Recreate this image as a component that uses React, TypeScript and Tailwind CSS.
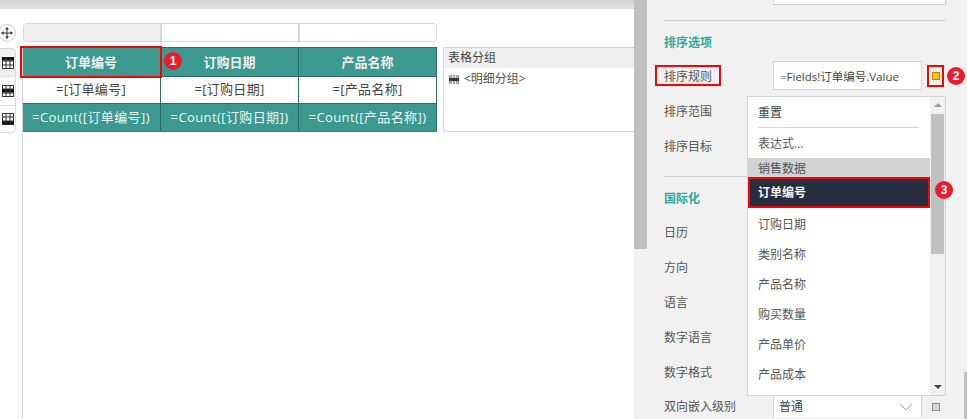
const font = { fontFamily: '"Open Sans", "Noto Sans CJK SC", sans-serif' };

const columnas = [
  { titulo: "订单编号", campo: "=[订单编号]", total: "=Count([订单编号])", ancho: "w-[139px]" },
  { titulo: "订购日期", campo: "=[订购日期]", total: "=Count([订购日期])", ancho: "w-[138px]" },
  { titulo: "产品名称", campo: "=[产品名称]", total: "=Count([产品名称])", ancho: "w-[138px]" },
];

const filasAbajo = ["日历", "方向", "语言", "数字语言", "数字格式"];

const campos = ["订购日期", "类别名称", "产品名称", "购买数量", "产品单价", "产品成本"];

function Badge({ n }: { n: number }) {
  return (
    <span className="flex h-[18px] w-[18px] items-center justify-center rounded-full bg-[#ec1c2c] text-[12px] font-bold leading-none text-white [font-family:'Liberation_Sans',sans-serif]">
      {n}
    </span>
  );
}

// fila: cuál banda del icono va en negro
function TablaIcon({ fila }: { fila: number }) {
  return (
    <svg width="12" height="12" viewBox="0 0 12 12" className="block">
      <rect x="0.5" y="0.5" width="11" height="11" fill="#fff" stroke="#333" />
      <rect x="0" y={fila} width="12" height="3.5" fill="#111" />
      <path d="M4 0v12M8 0v12M0 4h12M0 8h12" stroke="#333" strokeWidth="1" fill="none" />
    </svg>
  );
}

function MoverIcon() {
  return (
    <svg width="12" height="12" viewBox="0 0 12 12" className="block">
      <path d="M6 1.500v9M1.500 6h9" stroke="#333" strokeWidth="1" />
      <path d="M6 0l2 2.500H4zM6 12l2-2.500H4zM0 6l2.500-2v4zM12 6l-2.500-2v4z" fill="#333" />
    </svg>
  );
}

function Fila({ label, h, children }: { label: string; h: string; children?: React.ReactNode }) {
  return (
    <div className={`flex items-center ${h}`}>
      <span className="w-[109px] shrink-0 text-[12px] text-[#555]">{label}</span>
      {children}
    </div>
  );
}

export default function App() {
  return (
    <div style={font} className="relative flex h-[419px] w-[967px] overflow-hidden bg-white">
      {/* lienzo */}
      <div className="flex w-[634px] shrink-0 flex-col">
        <div className="h-[9px] shrink-0 bg-gradient-to-b from-[#d2d2d2] to-[#e4e4e4]" />
        <div className="relative flex-1">
          <div className="absolute bottom-0 left-[22px] top-[38px] w-px bg-[#d0d0d0]" />
          <div className="mt-[14px] flex h-[19px] items-center">
            <div className="flex w-[23px] justify-start">
              <span className="flex h-[18px] w-[18px] -translate-x-[2px] items-center justify-center rounded-full border border-[#d0d0d0] bg-white">
                <MoverIcon />
              </span>
            </div>
            <div className="flex h-[19px] w-[414px] overflow-hidden rounded-[4px] border border-[#d6d6d6]">
              <div className="w-[138px] border-r-2 border-[#d6d6d6] bg-[#f0f0f0]" />
              <div className="w-[138px] border-r-2 border-[#d6d6d6]" />
              <div className="flex-1" />
            </div>
          </div>

          <div className="mt-[5px] flex">
            <div className="mt-px flex w-[16px] shrink-0 flex-col">
              <div className="flex h-[29px] items-center justify-center rounded-tr-[4px] border border-l-0 border-[#dcdcdc] bg-[#f0f0f0]">
                <TablaIcon fila={0} />
              </div>
              <div className="flex h-[28px] items-center justify-center border-r border-[#dcdcdc]">
                <TablaIcon fila={4} />
              </div>
              <div className="flex h-[28px] items-center justify-center rounded-br-[4px] border border-l-0 border-[#dcdcdc]">
                <TablaIcon fila={8} />
              </div>
            </div>
            <div className="ml-[6px] w-[415px] shrink-0 border-t border-[#2c6f68]">
              <div className="flex h-[28px] bg-[#3b9990]">
                {columnas.map((c) => (
                  <div
                    key={c.titulo}
                    className={`${c.ancho} flex items-center justify-center border-r border-[#2c6f68] pt-px text-[13px] font-bold text-[#f0f0f0]`}
                  >
                    {c.titulo}
                  </div>
                ))}
              </div>
              <div className="flex h-[28px] border-y border-[#2c6f68] bg-white">
                {columnas.map((c) => (
                  <div
                    key={c.campo}
                    className={`${c.ancho} flex items-center justify-center border-r border-[#2c6f68] text-[13px] tracking-[0.3px] text-[#444]`}
                  >
                    {c.campo}
                  </div>
                ))}
              </div>
              <div className="flex h-[28px] border-b border-dotted border-[#2c6f68] bg-[#3b9990]">
                {columnas.map((c) => (
                  <div
                    key={c.total}
                    className={`${c.ancho} flex items-center justify-center border-r border-[#2c6f68] text-[13px] tracking-[0.4px] text-[#eef5f4]`}
                  >
                    {c.total}
                  </div>
                ))}
              </div>
            </div>
            <div className="ml-[6px] flex h-[85px] flex-1 flex-col border-y border-l border-[#d4d4d4]">
              <div className="flex h-[20px] items-center bg-[#f0f0f0] pl-[4px] text-[12px] text-[#444]">表格分组</div>
              <div className="flex h-[22px] items-center gap-[5px] pl-[5px] text-[12px] text-[#555]">
                <svg width="10" height="9" viewBox="0 0 10 9" className="block">
                  <rect width="10" height="9" fill="#a8a8a8" />
                  <rect y="3" width="10" height="3" fill="#333" />
                  <path d="M3.500 0v3M6.500 0v3M3.500 6v3M6.500 6v3" stroke="#e8e8e8" strokeWidth="1" />
                </svg>
                {"<明细分组>"}
              </div>
            </div>
          </div>

          <div className="absolute left-[20px] top-[37px] h-[32px] w-[142px] border-2 border-[#ff0000]" />
          <div className="absolute left-[164px] top-[43px]">
            <Badge n={1} />
          </div>
        </div>
      </div>

      {/* barra de desplazamiento */}
      <div className="flex w-[15px] shrink-0 flex-col bg-[#f1f1f1]">
        <div className="h-[249px] w-[13px] bg-[#c0c0c0]" />
      </div>

      {/* panel de propiedades */}
      <div className="relative flex-1 bg-[#f1f1f1] pl-[15px] pr-[21px]">
        <div className="flex h-[5px] justify-end">
          <div className="h-[5px] w-[173px] border border-t-0 border-[#d4d4d4] bg-white" />
        </div>
        <div className="mt-[15px] border-t border-[#d4d4d4]" />
        <div className="flex h-[40px] items-center pt-[3px] text-[12px] font-bold text-[#2fa99b]">排序选项</div>
        <div className="flex h-[29px] items-center">
          <span className="w-[109px] shrink-0 pt-[2px] text-[12px] text-[#555]">排序规则</span>
          <div className="flex h-[29px] w-[149px] items-center border border-[#d4d4d4] bg-white pl-[6px] pt-[2px] text-[11.500px] text-[#444]">
            =Fields!订单编号.Value
          </div>
          <span className="ml-[10px] h-[8px] w-[8px] border border-[#b58a12] bg-[#ffc000]" />
        </div>
        <Fila label="排序范围" h="h-[43px]" />
        <Fila label="排序目标" h="h-[25px] pt-[2px]" />
        <div className="mt-[18px] border-t border-[#d4d4d4]" />
        <div className="flex h-[37px] items-center pt-[7px] text-[12px] font-bold text-[#2fa99b]">国际化</div>
        {filasAbajo.map((f) => (
          <Fila key={f} label={f} h="h-[35px] pt-[2px]" />
        ))}
        <div className="mt-[6px] flex h-[23px] items-center">
          <span className="w-[109px] shrink-0 text-[12px] text-[#555]">双向嵌入级别</span>
          <div className="flex h-[23px] w-[149px] items-center justify-between border-x border-[#d4d4d4] bg-white pl-[5px] pr-[8px] text-[12px] text-[#444]">
            普通
            <svg width="14" height="8" viewBox="0 0 14 8">
              <path d="M1 1l6 6 6-6" fill="none" stroke="#9a9a9a" strokeWidth="1" />
            </svg>
          </div>
          <span className="ml-[10px] h-[8px] w-[8px] border border-[#8e8e8e] bg-[#d8d8d8]" />
        </div>

        {/* indicadores sobre el panel */}
        <div className="absolute left-[6px] top-[65px] h-[21px] w-[66px] border-2 border-[#ff0000]" />
        <div className="absolute left-[278px] top-[65px] h-[22px] w-[17px] border-2 border-[#ff0000]" />
        <div className="absolute left-[298px] top-[67px]">
          <Badge n={2} />
        </div>

        {/* menú desplegable */}
        <div className="absolute left-[98px] top-[96px] flex h-[300px] w-[199px] border border-[#d4d4d4] bg-white text-[12px] text-[#555]">
          <div className="flex w-[182px] shrink-0 flex-col">
            <div className="flex h-[30px] shrink-0 items-center pl-[10px] pt-[2px] text-[#444]">重置</div>
            <div className="ml-[10px] w-[161px] border-t border-[#d4d4d4]" />
            <div className="flex h-[30px] shrink-0 items-center pl-[10px] pt-[2px]">表达式...</div>
            <div className="flex h-[19px] shrink-0 items-center bg-[#d2d2d2] pl-[10px] pt-[2px]">销售数据</div>
            <div className="flex h-[31px] shrink-0 items-center border-2 border-[#ff0000] bg-[#272e42] pl-[8px] pt-[1px] font-bold text-[#f5f5f5]">
              订单编号
            </div>
            {campos.map((c) => (
              <div key={c} className="flex h-[30px] shrink-0 items-center pl-[10px] pt-[3px]">
                {c}
              </div>
            ))}
          </div>
          <div className="flex flex-1 flex-col items-center bg-[#f1f1f1]">
            <div className="mt-[6px] h-0 w-0 border-x-[4px] border-b-[4px] border-x-transparent border-b-[#9c9c9c]" />
            <div className="mt-[7px] h-[140px] w-[13px] bg-[#c0c0c0]" />
            <div className="mt-auto mb-[6px] h-0 w-0 border-x-[4px] border-t-[4px] border-x-transparent border-t-[#444]" />
          </div>
        </div>
        <div className="absolute left-[286px] top-[181px]">
          <Badge n={3} />
        </div>

        {/* barra exterior */}
        <div className="absolute bottom-0 right-0 h-[47px] w-[3px] bg-[#c0c0c0]" />
      </div>
    </div>
  );
}
